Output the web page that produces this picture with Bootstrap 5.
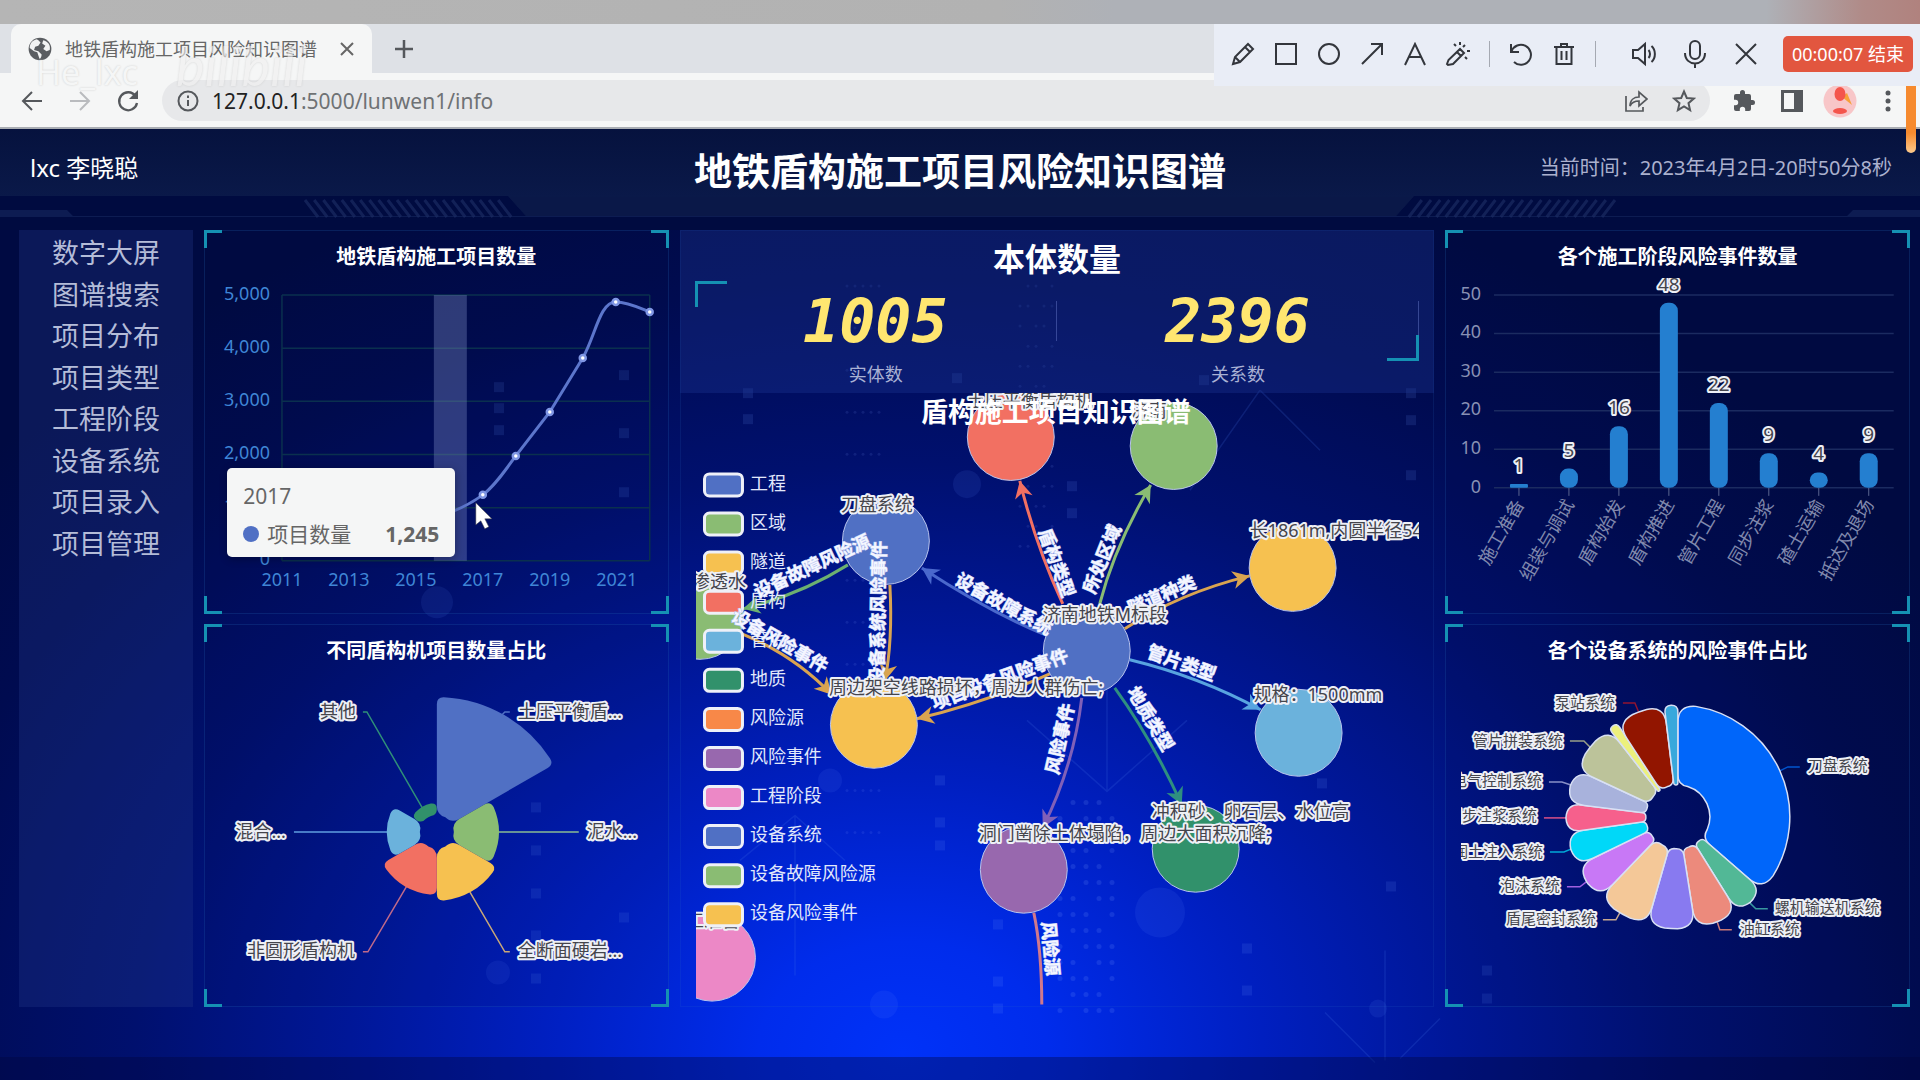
<!DOCTYPE html>
<html lang="zh-CN">
<head>
<meta charset="utf-8">
<meta name="viewport" content="width=device-width, initial-scale=1">
<title>地铁盾构施工项目风险知识图谱</title>
<link href="https://cdn.jsdelivr.net/npm/bootstrap@5.3.0/dist/css/bootstrap.min.css" rel="stylesheet">
<style>
body{font-family:"Noto Sans","Noto Sans CJK SC",sans-serif;background:#000b45;color:#fff;overflow-x:hidden}
button{border:0;background:none;padding:0;color:inherit}
svg{display:block}
.ico{fill:none;stroke:currentColor;stroke-width:2}
/* browser frame */
.strip{height:24px;background:linear-gradient(90deg,#b5b5b5 0,#b2b2b2 52%,#aeb1b7 58%,#aeb1b7 92%,#b08b88 97%,#b0827e)}
.tabs{height:49px;background:#dee1e6;padding-left:11px}
.tab-item{width:361px;background:#f5f6f6;border-radius:10px 10px 0 0;color:#666;padding:0 16px;font-size:18px;line-height:24px}
.tools{height:56px;background:#f5f6f6;color:#55585c;padding:1px 8px 0;border-bottom:2px solid #a9adb3}
.key{width:48px;height:40px;display:flex;align-items:center;justify-content:center;flex:none}
.pill{height:41px;background:#e7e8ea;border-radius:21px;margin:0 10px;padding:0 2px 0 6px}
.url{font-size:21px;line-height:28px;color:#6f7275;text-decoration:none}
.url b{font-weight:400;color:#222}
.snip{top:24px;right:0;height:62px;background:#e9edf6;color:#33363c;padding:0 7px 2px}
.snip .key{width:43px}.snip .wide{width:51px}
.bar-sep{width:1px;height:26px;background:#a5a9b2;margin:0 9px 0 10px}
.stop{width:130px;height:36px;background:#e2563f;border-radius:5px;color:#fff;font-size:18px;margin-left:12px}
.thumb{top:86px;right:4px;width:10px;height:67px;background:linear-gradient(#f68a2e 70%,#fbc98c);border-radius:0 0 6px 6px;z-index:3}
.mark-name{left:36px;top:52px;font-size:34px;line-height:40px;color:#f6f7f7;text-shadow:0 0 2px #c4c4c4;font-family:"Open Sans",sans-serif;opacity:.8;z-index:2}
.mark-site{left:176px;top:36px;font-size:54px;line-height:60px;color:#f1f1f1;text-shadow:0 0 2px #bbb;font-family:Lato,sans-serif;opacity:.6;z-index:2}
/* dashboard */
.board{background:radial-gradient(ellipse 1200px 920px at 47% 97%,#0032f8 0,#002cec 12%,#001fc0 30%,#001798 46%,#00106e 64%,#000b50 84%,#000a42 100%);min-height:951px;padding-bottom:74px}
.decor{inset:0;width:100%;height:100%;pointer-events:none}
.top{height:101px}
.top-bg{left:0;top:0;width:100%;height:101px}
.who{font-size:24px;line-height:32px;padding:23px 30px 0}
.top h1{font-size:38px;line-height:52px;font-weight:700;margin:0;padding-top:15px}
.clock{font-size:20px;line-height:28px;color:#abb1ce;padding:25px 28px 0}
.cols{gap:11px;padding:0 10px 0 19px}
.side{width:174px;background:rgba(38,58,140,.3);min-height:773px;flex:none}
.side ul{display:grid;grid-template-rows:repeat(8,1fr);height:332px;margin:2px 0 0;padding:0;list-style:none;text-align:center}
.side a{color:#b4bcd8;text-decoration:none;font-size:27px;line-height:41px}
.c-side{flex:465 1 0;min-width:0}.c-mid{flex:755 1 0;min-width:0;box-shadow:inset 0 0 0 1px rgba(40,110,200,.14)}
.panel{background:rgba(0,10,60,.08);box-shadow:inset 0 0 0 1px rgba(40,120,200,.2)}
.panel h2{font-size:20px;line-height:30px;font-weight:700;text-align:center;padding:12px 0 6px;margin:0}
.cn{position:absolute;width:18px;height:18px;border:0 solid #1591b3}
.tl{left:0;top:0;border-width:3px 0 0 3px}.tr{right:0;top:0;border-width:3px 3px 0 0}
.bl{left:0;bottom:0;border-width:0 0 3px 3px}.br{right:0;bottom:0;border-width:0 3px 3px 0}
.count-box{background:rgba(30,55,150,.34);height:163px;padding:0 15px}
.count-box h2{font-size:32px;line-height:44px;font-weight:700;text-align:center;margin:0;padding:7px 0 0}
.counts{height:80px}
.counts .cn{width:32px}
.counts .tl,.counts .br{height:26px}
.split{border-right:1px solid rgba(120,140,220,.4);height:40px;margin-top:20px}
.num{font:italic 700 60px/60px "DejaVu Sans Mono",monospace;color:#ffe670;margin-top:-10px}
.cap{font-size:18px;line-height:26px;color:#a9b1d4}
.plot{width:100%;height:auto}
.plot text{font-family:"Noto Sans","Noto Sans CJK SC",sans-serif}
.halo{fill:#45454c;stroke:#eef0f6;stroke-width:4px;stroke-linejoin:round;paint-order:stroke}
.elab{fill:#f4f6ff;stroke:#b4c0f0;stroke-width:1px;paint-order:stroke;font-weight:700;font-size:18px}
.tip{left:5%;top:238px;width:228px;height:89px;background:#f5f6f6;border-radius:5px;color:#666;padding:13px 16px;box-shadow:1px 2px 8px rgba(0,0,0,.3);font-size:21px;line-height:30px}
.tip i{width:16px;height:16px;border-radius:50%;background:#5070c4;margin-right:8px}
.foot{left:0;bottom:0;width:100%;height:24px;background:rgba(0,5,60,.38)}
</style>
</head>
<body>
<header class="position-relative">
  <div class="strip"></div>
  <div class="tabs d-flex align-items-stretch">
    <div class="tab-item d-flex align-items-center">
      <svg width="26" height="26" viewBox="0 0 24 24"><circle cx="12" cy="12" r="10.500" fill="#5a5d61"/><path d="M9 3c-4 1-6.500 4-6.500 8l4 3 3 1 1 3 1 3c1 0 2-2 2-4l-3-3-4-1 1-3 3-1 2-3-2-2zM15 4l-1 3 3 2-2 3 3 2 3-1c1-5-2-8-6-9z" fill="#f1f2f2"/></svg>
      <span class="ms-2 text-nowrap ps-1 flex-grow-1">地铁盾构施工项目风险知识图谱</span>
      <button aria-label="关闭标签页"><svg class="ico" width="18" height="18" viewBox="0 0 18 18"><path d="M3 3l12 12M15 3L3 15"/></svg></button>
    </div>
    <button class="key align-self-center ms-2" aria-label="新标签页"><svg class="ico" width="20" height="20" viewBox="0 0 20 20" style="color:#55585c;stroke-width:2.500"><path d="M10 1v18M1 10h18"/></svg></button>
  </div>
  <div class="tools d-flex align-items-center">
    <button class="key" aria-label="后退"><svg class="ico" width="22" height="22" viewBox="0 0 22 22"><path d="M21 11H2M11 2l-9 9 9 9"/></svg></button>
    <button class="key" aria-label="前进" style="color:#b9bbbe"><svg class="ico" width="22" height="22" viewBox="0 0 22 22"><path d="M1 11h19M11 2l9 9-9 9"/></svg></button>
    <button class="key" aria-label="刷新"><svg class="ico" width="24" height="24" viewBox="0 0 24 24"><path d="M19.500 7A9 9 0 1 0 21 14" stroke-width="2.300"/><path d="M22 1v9h-9z" fill="currentColor" stroke="none"/></svg></button>
    <div class="pill d-flex align-items-center flex-grow-1">
      <button class="key" style="width:40px" aria-label="网站信息"><svg class="ico" width="22" height="22" viewBox="0 0 22 22"><circle cx="11" cy="11" r="9.500"/><path d="M11 10v6M11 5.500v2.500"/></svg></button>
      <a class="url flex-grow-1 ms-1 text-nowrap" href="#"><b>127.0.0.1</b>:5000/lunwen1/info</a>
      <button class="key" aria-label="分享"><svg class="ico" width="24" height="24" viewBox="0 0 24 24" style="stroke-width:1.700"><path d="M2 7v15h17v-4M6 17c0-6 4-9 9-9V3l8 7-8 7v-5c-4 0-7 1-9 5z"/></svg></button>
      <button class="key" aria-label="收藏"><svg class="ico" width="24" height="24" viewBox="0 0 24 24"><path d="M12 2.500l2.800 6.500 7 .6-5.300 4.600 1.600 6.900-6.100-3.700-6.100 3.700 1.600-6.900L2.200 9.600l7-.6z"/></svg></button>
    </div>
    <button class="key" aria-label="扩展程序"><svg width="24" height="24" viewBox="0 0 24 24"><path fill="currentColor" d="M20.500 11H19V7a2 2 0 0 0-2-2h-4V3.500a2.500 2.500 0 0 0-5 0V5H4a2 2 0 0 0-2 2v3.800h1.500a2.700 2.700 0 0 1 0 5.400H2V20a2 2 0 0 0 2 2h3.800v-1.500a2.700 2.700 0 0 1 5.400 0V22H17a2 2 0 0 0 2-2v-4h1.500a2.500 2.500 0 0 0 0-5z"/></svg></button>
    <button class="key" aria-label="侧边栏"><svg width="22" height="22" viewBox="0 0 22 22"><path fill="currentColor" d="M0 0h22v22H0zM3 3v16h10V3z" fill-rule="evenodd"/></svg></button>
    <button class="key" aria-label="用户"><svg width="34" height="34" viewBox="0 0 34 34"><circle cx="17" cy="17" r="16.500" fill="#f8c6c8"/><path d="M19 13l5-4 5 12z" fill="#f6a13a"/><ellipse cx="17" cy="10" rx="5.500" ry="7" fill="#f4554c"/><ellipse cx="17" cy="27" rx="7" ry="3" fill="#f4554c"/></svg></button>
    <button class="key" aria-label="更多"><svg width="6" height="24" viewBox="0 0 6 24" fill="currentColor"><circle cx="3" cy="4" r="2.500"/><circle cx="3" cy="12" r="2.500"/><circle cx="3" cy="20" r="2.500"/></svg></button>
  </div>
  <div class="snip position-absolute d-flex align-items-center">
    <button class="key" aria-label="画笔"><svg class="ico" width="24" height="24" viewBox="0 0 24 24"><path d="M2 22l2-7L17 2l5 5L9 20zM14 5l5 5M4 15l5 5"/></svg></button>
    <button class="key" aria-label="矩形"><svg class="ico" width="24" height="24" viewBox="0 0 24 24"><path d="M2 2h20v20H2z"/></svg></button>
    <button class="key" aria-label="圆形"><svg class="ico" width="24" height="24" viewBox="0 0 24 24"><circle cx="12" cy="12" r="10"/></svg></button>
    <button class="key" aria-label="箭头"><svg class="ico" width="24" height="24" viewBox="0 0 24 24"><path d="M2 22L22 2M11 2h11v11"/></svg></button>
    <button class="key" aria-label="文字"><svg class="ico" width="24" height="24" viewBox="0 0 24 24"><path d="M2 23L12 2l10 21M6 15h12"/></svg></button>
    <button class="key" aria-label="魔术笔"><svg class="ico" width="26" height="26" viewBox="0 0 26 26"><path d="M2 23l1.500-4L15 8l4 4L8 23l-5 1zM12 11l4 4M15 1v3M9 3l2 2M20 4l-2 2M22 10h3M20 16l2 2"/></svg></button>
    <span class="bar-sep"></span>
    <button class="key" aria-label="撤销"><svg class="ico" width="24" height="24" viewBox="0 0 24 24"><path d="M2 2v8h8M2.500 9.500A10 10 0 1 1 5 20"/></svg></button>
    <button class="key" aria-label="删除"><svg class="ico" width="24" height="24" viewBox="0 0 24 24"><path d="M2 5h20M4.500 5v17h15V5M9 5V2h6v3M9.500 9v9M14.500 9v9"/></svg></button>
    <span class="bar-sep"></span>
    <button class="key wide" style="margin-left:13px" aria-label="声音"><svg class="ico" width="26" height="26" viewBox="0 0 26 26"><path d="M2 9h5l7-6v20l-7-6H2zM17.500 9c2 2 2 6 0 8M20.500 5c4.500 4 4.500 12 0 16"/></svg></button>
    <button class="key wide" aria-label="麦克风"><svg class="ico" width="26" height="30" viewBox="0 0 26 30"><rect x="8" y="2" width="10" height="18" rx="5"/><path d="M3 14c0 14 20 14 20 0M13 24v5"/></svg></button>
    <button class="key wide" aria-label="关闭"><svg class="ico" width="24" height="24" viewBox="0 0 24 24"><path d="M2 2l20 20M22 2L2 22"/></svg></button>
    <button class="stop text-nowrap">00:00:07 结束</button>
  </div>
  <div class="position-absolute mark-name">He_lxc</div>
  <div class="position-absolute mark-site fst-italic">bilibili</div>
  <div class="position-absolute thumb"></div>
</header>

<main class="board position-relative">
  <svg class="decor position-absolute" id="decor" viewBox="0 129 1920 951" preserveAspectRatio="none" aria-hidden="true"></svg>
  <div class="top position-relative">
    <svg class="top-bg position-absolute" viewBox="0 129 1920 101" preserveAspectRatio="none" aria-hidden="true">
      <defs><linearGradient id="hd" x1="0" y1="0" x2="0" y2="1"><stop offset="0" stop-color="#06123e"/><stop offset="1" stop-color="#0b1b4c"/></linearGradient></defs>
      <rect y="129" width="1920" height="101" fill="#000b40"/>
      <path d="M0 129H1920V196H1414L1396 216H526L508 196H0z" fill="url(#hd)"/>
      <path d="M0 210h67l6 6h1774l6-6h67v7H0z" fill="#13235a" opacity=".7"/>
      <path d="M526 216L509 197H1413L1396 216z" fill="#0a1848"/>
      <g id="hatch" stroke="#1b2b62" stroke-width="3" opacity=".7"></g>
    </svg>
    <div class="position-relative d-flex justify-content-between">
      <div class="who w-25">lxc 李晓聪</div>
      <h1 class="text-center text-nowrap">地铁盾构施工项目风险知识图谱</h1>
      <div class="clock w-25 text-end text-nowrap">当前时间：2023年4月2日-20时50分8秒</div>
    </div>
  </div>

  <div class="cols d-flex align-items-stretch position-relative">
    <nav class="side">
      <ul>
        <li><a href="#">数字大屏</a></li><li><a href="#">图谱搜索</a></li><li><a href="#">项目分布</a></li><li><a href="#">项目类型</a></li>
        <li><a href="#">工程阶段</a></li><li><a href="#">设备系统</a></li><li><a href="#">项目录入</a></li><li><a href="#">项目管理</a></li>
      </ul>
    </nav>

    <div class="c-side d-flex flex-column" style="gap:10px">
      <section class="panel position-relative">
        <h2>地铁盾构施工项目数量</h2>
        <svg class="plot" id="lineChart" viewBox="204 277 465 336"></svg>
        <div class="tip position-absolute">
          <div>2017</div>
          <div class="d-flex align-items-center mt-2"><i></i><span>项目数量</span><strong class="ms-auto">1,245</strong></div>
        </div>
        <i class="cn tl"></i><i class="cn tr"></i><i class="cn bl"></i><i class="cn br"></i>
      </section>
      <section class="panel position-relative">
        <h2>不同盾构机项目数量占比</h2>
        <svg class="plot" id="roseChart" viewBox="204 671 465 335"></svg>
        <i class="cn tl"></i><i class="cn tr"></i><i class="cn bl"></i><i class="cn br"></i>
      </section>
    </div>

    <div class="c-mid">
      <section class="count-box">
        <h2>本体数量</h2>
        <div class="counts position-relative d-flex">
          <div class="w-50 text-center split"><div class="num">1005</div></div>
          <div class="w-50 text-center split"><div class="num">2396</div></div>
          <i class="cn tl"></i><i class="cn br"></i>
        </div>
        <div class="d-flex text-center cap"><div class="w-50">实体数</div><div class="w-50">关系数</div></div>
      </section>
      <div style="padding:0 15px 0 16px"><svg class="plot" id="graph" viewBox="696 392 724 612"></svg></div>
    </div>

    <div class="c-side d-flex flex-column" style="gap:10px">
      <section class="panel position-relative">
        <h2>各个施工阶段风险事件数量</h2>
        <svg class="plot" id="barChart" viewBox="1446 277 465 336"></svg>
        <i class="cn tl"></i><i class="cn tr"></i><i class="cn bl"></i><i class="cn br"></i>
      </section>
      <section class="panel position-relative">
        <h2>各个设备系统的风险事件占比</h2>
        <div class="px-3"><svg class="plot" id="ringChart" viewBox="1462 671 433 335"></svg></div>
        <i class="cn tl"></i><i class="cn tr"></i><i class="cn bl"></i><i class="cn br"></i>
      </section>
    </div>
  </div>
  <div class="foot position-absolute"></div>
</main>

<script src="https://cdn.jsdelivr.net/npm/bootstrap@5.3.0/dist/js/bootstrap.bundle.min.js"></script>
<script>
const put = (id, html) => document.getElementById(id).innerHTML = html;
const C = {blue:'#5070c4', green:'#8abc73', yellow:'#f6c150', red:'#f27062', sky:'#6bb2dc', dark:'#31916b', orange:'#f88848', purple:'#9868ae', pink:'#ec88c6'};
const text = (x, y, s, o = '') => `<text x="${x}" y="${y}" dy=".37em" ${o}>${s}</text>`;

/* ring sector with rounded corners, angles clockwise from the top */
function sector(cx, cy, r0, r1, a0, a1, co, ci) {
  const k = Math.PI / 180; a0 *= k; a1 *= k;
  const p = (r, a) => `${(cx + r * Math.sin(a)).toFixed(1)} ${(cy - r * Math.cos(a)).toFixed(1)}`;
  const o = Math.min(co, (a1 - a0) * r1 / 2, (r1 - r0) / 2), i = Math.min(ci, (a1 - a0) * r0 / 2, (r1 - r0) / 2);
  const big = a1 - a0 > Math.PI ? 1 : 0;
  return `M${p(r0 + i, a0)}L${p(r1 - o, a0)}Q${p(r1, a0)} ${p(r1, a0 + o / r1)}A${r1} ${r1} 0 ${big} 1 ${p(r1, a1 - o / r1)}Q${p(r1, a1)} ${p(r1 - o, a1)}L${p(r0 + i, a1)}Q${p(r0, a1)} ${p(r0, a1 - i / r0)}A${r0} ${r0} 0 ${big} 0 ${p(r0, a0 + i / r0)}Q${p(r0, a0)} ${p(r0 + i, a0)}Z`;
}

/* header hatching */
let h = '';
for (let i = 0; i < 22; i++) { const x = 305 + i * 9.2; h += `<path d="M${x} 200l13 17M${1920 - x} 200l-13 17"/>`; }
put('hatch', h);

/* backdrop shapes */
const sq = [[499,387],[499,408],[499,430],[624,375],[624,433],[624,492],[536,807],[536,850],[536,893],[536,935],[536,978],[624,917],[957,378],[1204,380],[748,393],[748,419],[1411,393],[1411,420],[1072,486],[1072,513],[1411,475],[940,780],[940,822],[940,845],[998,924],[998,981],[998,1008],[1322,783],[1391,886],[1247,948],[1247,990],[1487,970],[1487,998]];
let d = sq.map(([x, y]) => `<rect x="${x - 5}" y="${y - 5}" width="10" height="10" fill="#6f9cff" opacity=".13"/>`).join('');
for (const [x, y, r] of [[1160,912,25],[437,602,16],[967,484,14],[884,1004,14],[830,780,12],[1378,1008,9],[498,972,12]]) d += `<circle cx="${x}" cy="${y}" r="${r}" fill="#5a86ff" opacity=".11"/>`;
d += '<path d="M1027 720l80 71 80-71M1107 791V660M740 860l55-45 50 45M795 815v160M1260 390l-70 100M1260 390l60 60M1325 1012l50 50M1440 1018l-40 40M1385 950v110" fill="none" stroke="#4a7ae8" stroke-width="1.500" opacity=".18"/>';
for (let r = 0; r < 14; r++) for (let c = 0; c < 5; c++) {
  d += `<circle cx="${1060 + c * 13}" cy="${802 + r * 16}" r="${(r * 3 + c) % 4 ? 2.500 : 0}" fill="#7aa0ff" opacity=".16"/><circle cx="${1020 + c * 8}" cy="${286 + r * 20}" r="${(r + c) % 3 ? 1.500 : 0}" fill="#7aa0ff" opacity=".12"/><circle cx="${847 + c * 8}" cy="${286 + r * 42}" r="1.500" fill="#7aa0ff" opacity=".12"/>`;
}
put('decor', d);

/* yearly projects */
let s = '';
for (let i = 0; i < 6; i++) {
  const y = 294 + i * 53.2;
  s += `<path d="M282 ${y}H650" stroke="#0a304e" stroke-width="1.500"/>` + text(270, y - 2, i < 5 ? (5 - i) + ',000' : '0', 'text-anchor="end" font-size="18" fill="#3f86d6"') + text(282 + i * 67, 579, 2011 + i * 2, 'text-anchor="middle" font-size="18" fill="#3f86d6"');
}
s += '<path d="M282 294V560M650 294V560" stroke="#0a304e" stroke-width="1.500"/><rect x="434" y="294" width="33" height="266" fill="#8090c8" opacity=".36"/><path d="M400 525C430 520 460 511 483 494C495 485 505 470 516 455L550 411L583 357C596 334 600 301 616 301C628 301 640 307 650 311" fill="none" stroke="#5c76cc" stroke-width="3"/>';
for (const [x, y] of [[483,494],[516,455],[550,411],[583,357],[616,301],[650,311]]) s += `<circle cx="${x}" cy="${y}" r="3" fill="#fff" stroke="#7f96e4" stroke-width="2.500"/>`;
s += '<path d="M476 502v22l5-4 4 8 4-2-4-8h7z" fill="#fff" stroke="#444" stroke-width=".5"/>';
put('lineChart', s);

/* shield machine types */
const rose = [[135,C.blue],[62,C.green],[69,C.yellow],[63,C.red],[50,C.sky],[29,C.dark]];
s = '<g fill="none" stroke-width="1.500"><path d="M363 711h4l56 97" stroke="#2f8f78"/><path d="M510 711h-5l-8 8" stroke="#5070c4"/><path d="M294 831h94" stroke="#5f9fe0"/><path d="M499 831h80" stroke="#8abc93"/><path d="M363 951h5l39-66" stroke="#c06a8a"/><path d="M510 951h-5l-35-60" stroke="#c9a878"/></g>';
rose.forEach(([r, c], i) => s += `<path d="${sector(437, 831, 17, r, i * 60, i * 60 + 60, 7, 9)}" fill="${c}"/>`);
for (const [x, y, t, a] of [[356,710,'其他','end'],[518,710,'土压平衡盾...','start'],[286,830,'混合...','end'],[587,830,'泥水...','start'],[355,950,'非圆形盾构机','end'],[518,950,'全断面硬岩...','start']]) s += text(x, y, t, `class="halo" font-size="18" text-anchor="${a}"`);
put('roseChart', s);

/* risk events per stage */
s = '';
for (let i = 0; i < 6; i++) { const y = 294 + i * 38.6; s += `<path d="M1495 ${y}H1895" stroke="#1b2b60" stroke-width="1.500"/>` + text(1482, y - 2, 50 - i * 10, 'text-anchor="end" font-size="18" fill="#8890b4"'); }
[['施工准备',1],['组装与调试',5],['盾构始发',16],['盾构推进',48],['管片工程',22],['同步注浆',9],['碴土运输',4],['抵达及退场',9]].forEach(([n, v], i) => {
  const x = 1520 + i * 50, hh = v * 3.86, r = Math.min(8, hh / 2);
  s += `<path d="M${x} 487v8" stroke="#5a6690"/><rect x="${x - 9}" y="${487 - hh}" width="18" height="${hh}" rx="${v < 2 ? 1 : r}" fill="#247fd0"/>`;
  s += text(x, 468 - hh, v, 'class="halo" font-size="19" text-anchor="middle"');
  s += `<text transform="translate(${x} 500) rotate(-60)" dy=".37em" text-anchor="end" font-size="18" fill="#8189ad">${n}</text>`;
});
put('barChart', s);

/* equipment systems */
const ring = [[131,'#0066fa'],[148,'#52b896'],[171,'#ec8a7c'],[196,'#887af0'],[224,'#f4c898'],[244,'#c878f6'],[262,'#00d8f8'],[277,'#f6608c'],[295,'#a8b2dc'],[322,'#bcc39a'],[327,'#ecf07c'],[353,'#921500'],[360,'#38a8dc']];
s = '<g fill="none" stroke-width="1.500"><path d="M1624 702h12l5 12" stroke="#921530"/><path d="M1571 740h14l8 8" stroke="#98a088"/><path d="M1550 781h13l12 4" stroke="#8890c8"/><path d="M1545 817h24" stroke="#d85088"/><path d="M1551 851h14l10-4" stroke="#00a8d8"/><path d="M1568 886h13l9-7" stroke="#a060e0"/><path d="M1604 919h13l5-9" stroke="#c8a890"/><path d="M1733 929h-12l-4-12" stroke="#c87878"/><path d="M1769 908h-12l-8-8" stroke="#3898a0"/><path d="M1801 766h-12l-10 5" stroke="#0055d0"/></g>';
let a = 0;
for (const [e, c] of ring) { s += `<path d="${sector(1679, 816, 32, 112, a, e, 18, 10)}" fill="${c}" stroke="#d8e0f4" stroke-width="1.500"/>`; a = e; }
for (const [x, y, t, an] of [[1616,701,'泵站系统','end'],[1564,739,'管片拼装系统','end'],[1543,780,'电气控制系统','end'],[1538,815,'同步注浆系统','end'],[1544,851,'膨润土注入系统','end'],[1561,885,'泡沫系统','end'],[1597,918,'盾尾密封系统','end'],[1741,928,'油缸系统','start'],[1776,907,'螺机输送机系统','start'],[1809,765,'刀盘系统','start']]) s += text(x, y, t, `class="halo" font-size="15" text-anchor="${an}"`);
put('ringChart', s);

/* knowledge graph */
const edges = [
 [1063,603,1036,545,1020,480,C.red],[1100,603,1115,545,1151,484,C.green],[1125,628,1180,592,1250,575,'#d9a450'],[1130,659,1200,676,1261,709,'#58a4e0'],
 [1115,687,1152,738,1182,804,'#2e8f80'],[1082,697,1074,765,1043,827,'#8060b8'],[1043,633,988,610,922,567,'#4a68cc'],[1050,673,985,702,917,718,'#d9a450'],
 [890,584,893,640,885,680,'#d9a450'],[848,564,800,594,743,608,'#6cb070'],[742,633,795,655,832,694,'#d9a450']];
s = '';
for (const [x0, y0, cx, cy, x1, y1, c] of edges) {
  const g = Math.atan2(y1 - cy, x1 - cx) * 180 / Math.PI;
  s += `<path d="M${x0} ${y0}Q${cx} ${cy} ${x1} ${y1}" fill="none" stroke="${c}" stroke-width="3"/><path d="M0 0L-17 -9L-12 0L-17 9z" transform="translate(${x1} ${y1}) rotate(${g})" fill="${c}"/>`;
}
s += '<path d="M1034 912Q1042 950 1042 1004" fill="none" stroke="#d0788c" stroke-width="3"/>';
for (const [x, y, c] of [[1011,436,C.red],[1174,445,C.green],[886,540,C.blue],[874,724,C.yellow],[700,615,C.green],[1087,650,C.blue],[1293,567,C.yellow],[1299,732,C.sky],[1196,848,C.dark],[1024,869,C.purple],[712,957,C.pink]]) s += `<circle cx="${x}" cy="${y}" r="43.500" fill="${c}" stroke="#b8c4ec"/>`;
s += text(740, 920, '施工准备', 'class="halo" font-size="18" text-anchor="end"');
[['工程',C.blue],['区域',C.green],['隧道',C.yellow],['盾构',C.red],['管片',C.sky],['地质',C.dark],['风险源',C.orange],['风险事件',C.purple],['工程阶段',C.pink],['设备系统',C.blue],['设备故障风险源',C.green],['设备风险事件',C.yellow]].forEach(([n, c], i) => {
  const y = 484 + i * 39.1;
  s += `<rect x="704.500" y="${y - 11}" width="38" height="22" rx="5" fill="${c}" stroke="#eef0f8" stroke-width="3"/>` + text(750, y - 2, n, 'font-size="18" fill="#e2e8fb"');
});
for (const [x, y, g, t] of [[1057,562,70,'盾构类型'],[1102,558,-68,'所处区域'],[1162,594,-23,'隧道种类'],[1182,662,20,'管片类型'],[1151,718,59,'地质类型'],[1060,738,-77,'风险事件'],[1004,603,29,'设备故障系统'],[1000,678,-20,'项目设备风险事件'],[878,612,-89,'设备系统风险事件'],[812,565,-25,'设备故障风险源'],[780,640,30,'设备风险事件'],[1051,948,85,'风险源']]) s += `<text class="elab" transform="translate(${x} ${y}) rotate(${g})" dy=".37em" text-anchor="middle">${t}</text>`;
for (const [x, y, t] of [[967,399,'土压平衡盾构机'],[1131,409,'济南'],[841,503,'刀盘系统'],[1043,613,'济南地铁M标段'],[829,687,'周边架空线路损坏，周边人群伤亡;'],[1250,529,'长1861m,内圆半径5400mm'],[1254,694,'规格：1500mm'],[1152,811,'冲积砂、卵石层、水位高'],[979,833,'洞门凿除土体塌陷，周边大面积沉降;'],[692,580,'渗透水']]) s += text(x, y, t, 'class="halo" font-size="18"');
s += text(1056, 411, '盾构施工项目知识图谱', 'font-size="27" font-weight="700" fill="#fff" text-anchor="middle"');
put('graph', s);
</script>
</body>
</html>
